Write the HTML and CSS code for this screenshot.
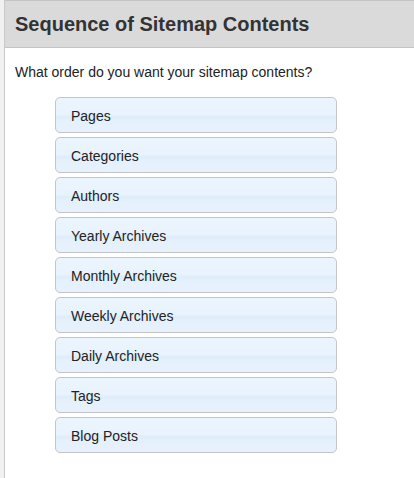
FILE: index.html
```html
<!DOCTYPE html>
<html>
<head>
<meta charset="utf-8">
<link rel="stylesheet" href="styles.css">
</head>
<body>
<div class="page">
  <div class="rail"></div>
  <div class="main">
    <div class="header"><h2 class="title">Sequence of Sitemap Contents</h2></div>
    <p class="question">What order do you want your sitemap contents?</p>
    <ul class="sortable">
      <li class="item">Pages</li>
      <li class="item">Categories</li>
      <li class="item">Authors</li>
      <li class="item">Yearly Archives</li>
      <li class="item">Monthly Archives</li>
      <li class="item">Weekly Archives</li>
      <li class="item">Daily Archives</li>
      <li class="item">Tags</li>
      <li class="item">Blog Posts</li>
    </ul>
  </div>
</div>
</body>
</html>
```

FILE: styles.css
```css
html, body {
  margin: 0;
  padding: 0;
  background: #fff;
  font-family: "Liberation Sans", Arial, sans-serif;
  color: #222;
}
.page {
  display: flex;
  min-height: 478px;
}
.rail {
  width: 4px;
  background: #f1f1f1;
  border-right: 1px solid #c9c9c9;
  flex: none;
}
.main {
  flex: 1;
}
.header {
  height: 46px;
  background: #dadada;
  border-top: 1px solid #c4c4c4;
  border-bottom: 1px solid #c4c4c4;
  display: flex;
  align-items: center;
  padding-left: 10px;
}
.title {
  margin: 0;
  font-size: 20px;
  font-weight: bold;
  color: #333;
}
.question {
  margin: 15px 0 0 10px;
  font-size: 14px;
  line-height: 18px;
  color: #222;
}
.sortable {
  list-style: none;
  margin: 16px 0 0 50px;
  padding: 0;
  width: 282px;
  display: flex;
  flex-direction: column;
  gap: 4px;
}
.item {
  box-sizing: border-box;
  height: 36px;
  border: 1px solid #c5c5c5;
  border-radius: 5px;
  background: linear-gradient(#ebf5fe 0%, #e8f3fd 48%, #deedfb 56%, #e4f0fc 66%, #e7f2fd 100%);
  padding: 0 0 0 15px;
  font-size: 14px;
  line-height: 36px;
  color: #222;
}
```
